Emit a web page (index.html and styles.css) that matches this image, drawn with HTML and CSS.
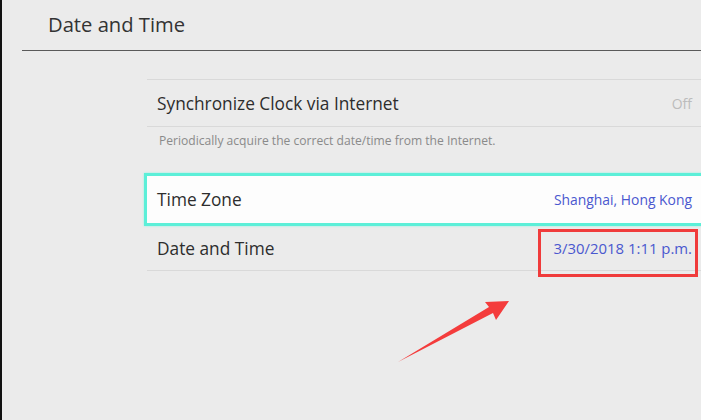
FILE: index.html
```html
<!DOCTYPE html>
<html lang="en">
  <head>
    <meta charset="UTF-8" />
    <title>Date and Time</title>
    <link rel="stylesheet" href="styles.css">
  </head>
  <body>
    <div class="screen">
      <div class="topbar">
        <h1>Date and Time</h1>
      </div>
      <div class="settings">
        <div class="row">
          <span class="label">Synchronize Clock via Internet</span>
          <span class="value off">Off</span>
        </div>
        <p class="hint">Periodically acquire the correct date/time from the Internet.</p>
        <div class="row selected">
          <span class="label">Time Zone</span>
          <span class="value">Shanghai, Hong Kong</span>
        </div>
        <div class="row last">
          <span class="label">Date and Time</span>
          <span class="value date">3/30/2018 1:11 p.m.</span>
        </div>
      </div>
      <div class="mark"></div>
      <svg class="arrow" width="701" height="420" viewBox="0 0 701 420">
        <polygon points="398,362 489,307 485,302 509,301 496,320 493,313" fill="#f43c3c" />
      </svg>
    </div>
  </body>
</html>
```

FILE: styles.css
```css
body {
  margin: 0;
  padding: 0;
  background: #ebebeb;
  font-family: "Open Sans", "DejaVu Sans", sans-serif;
  color: #2d2d2d;
}
.screen {
  position: relative;
  width: 699px;
  height: 420px;
  border-left: 2px solid #111;
  overflow: hidden;
}
.topbar {
  margin-left: 20px;
  height: 51px;
  border-bottom: 1px solid #5a5a5a;
  box-sizing: border-box;
  padding-left: 26px;
}
h1 {
  margin: 0;
  padding-top: 11px;
  font-size: 20.2px;
  font-weight: 400;
  line-height: 27px;
  color: #333;
}
.settings {
  margin-left: 145px;
  margin-top: 28px;
}
.row {
  display: flex;
  justify-content: space-between;
  align-items: center;
  height: 46px;
  padding: 0 9px 0 10px;
  border-top: 1px solid #d9d9d9;
  border-bottom: 1px solid #d9d9d9;
}
.label {
  font-size: 17.3px;
}
.value {
  font-size: 13.9px;
  color: #4a58cf;
}
.value.off {
  font-size: 14px;
  color: #bcbcbc;
}
.value.date {
  font-size: 14.9px;
}
.hint {
  margin: 0;
  height: 46px;
  padding: 5px 0 0 12px;
  box-sizing: border-box;
  font-size: 12.1px;
  color: #8a8a8a;
}
.row.selected {
  height: 47px;
  margin-left: -3px;
  margin-right: -10px;
  padding-left: 10px;
  padding-right: 16px;
  background: #fdfdfd;
  border: 3px solid #5cefd8;
  box-shadow: 0 0 2px #8ff5e5;
}
.row.last {
  height: 44px;
  border-top: none;
}
.mark {
  position: absolute;
  left: 536px;
  top: 229px;
  width: 154px;
  height: 42px;
  border: 3px solid #f03b3b;
}
.arrow {
  position: absolute;
  left: -2px;
  top: 0;
}
```
